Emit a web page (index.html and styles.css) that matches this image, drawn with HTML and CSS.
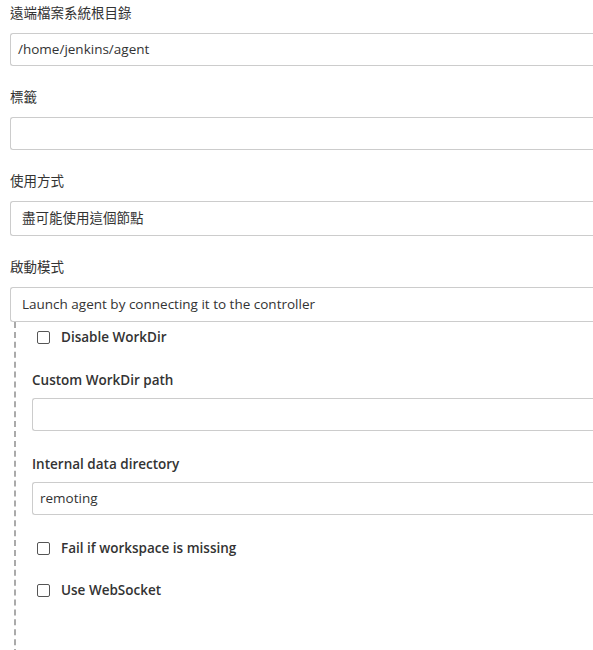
FILE: index.html
```html
<!DOCTYPE html>
<html lang="zh-Hant">
<head>
<meta charset="utf-8">
<link rel="stylesheet" href="styles.css">
</head>
<body>
<div class="form">
  <div class="field">
    <div class="label">遠端檔案系統根目錄</div>
    <div class="input">/home/jenkins/agent</div>
  </div>
  <div class="field">
    <div class="label">標籤</div>
    <div class="input"></div>
  </div>
  <div class="field">
    <div class="label">使用方式</div>
    <div class="input select">盡可能使用這個節點</div>
  </div>
  <div class="field last">
    <div class="label">啟動模式</div>
    <div class="input select">Launch agent by connecting it to the controller</div>
  </div>
  <div class="nested">
    <label class="check first"><span class="box"></span><span>Disable WorkDir</span></label>
    <div class="field sub">
      <div class="label strong">Custom WorkDir path</div>
      <div class="input"></div>
    </div>
    <div class="field sub end">
      <div class="label strong">Internal data directory</div>
      <div class="input">remoting</div>
    </div>
    <label class="check"><span class="box"></span><span>Fail if workspace is missing</span></label>
    <label class="check"><span class="box"></span><span>Use WebSocket</span></label>
  </div>
</div>
</body>
</html>
```

FILE: styles.css
```css
html, body {
  margin: 0;
  padding: 0;
  background: #fff;
  overflow: hidden;
  height: 650px;
}
body {
  font-family: "Open Sans", "Noto Sans CJK TC", sans-serif;
  color: #333;
  font-size: 14px;
}
.form {
  padding: 3px 0 0 10px;
  overflow: hidden;
}
.field {
  margin-bottom: 21px;
}
.field.last {
  margin-bottom: 0;
}
.label {
  line-height: 20px;
  height: 20px;
  margin-bottom: 10px;
  font-size: 13.5px;
  color: #333;
}
.label.strong {
  font-weight: 600;
  margin-bottom: 8px;
}
.input {
  box-sizing: border-box;
  height: 33px;
  border: 1px solid #ccc;
  border-right: none;
  border-radius: 3px 0 0 3px;
  padding: 0 7px;
  line-height: 31px;
  font-size: 13.5px;
  color: #333;
  white-space: nowrap;
}
.input.select {
  height: 35px;
  line-height: 33px;
  padding-left: 11px;
}
.nested {
  border-left: 2px dashed #aaa;
  margin-left: 4px;
  padding-left: 16px;
  padding-top: 3px;
  height: 340px;
}
.check {
  display: flex;
  align-items: center;
  gap: 11px;
  height: 24px;
  padding-left: 5px;
  font-weight: 600;
  font-size: 13.5px;
  margin-bottom: 18px;
}
.check.first {
  margin-bottom: 21px;
}
.box {
  width: 11px;
  height: 11px;
  border: 1px solid #555;
  border-radius: 2px;
  box-sizing: content-box;
}
.field.sub {
  margin-bottom: 23px;
}
.field.sub.end {
  margin-bottom: 21px;
}
```
